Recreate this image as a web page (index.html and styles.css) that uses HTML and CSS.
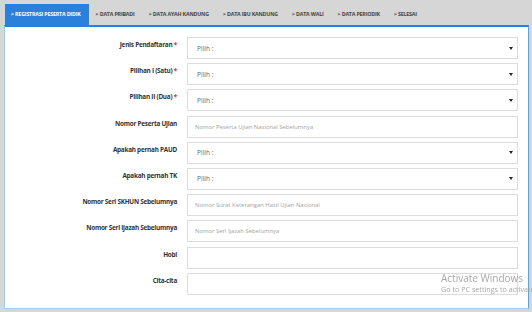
FILE: index.html
```html
<!DOCTYPE html>
<html lang="en">
<head>
    <meta charset="UTF-8">
    <meta name="viewport" content="width=device-width, initial-scale=1.0">
    <title>Registrasi Peserta Didik</title>
    <link rel="stylesheet" href="styles.css">
</head>
<body>
<div class="wrap">
    <!-- Step tabs -->
    <ul class="tabs">
        <li class="active">&gt; REGISTRASI PESERTA DIDIK</li>
        <li>&gt; DATA PRIBADI</li>
        <li>&gt; DATA AYAH KANDUNG</li>
        <li>&gt; DATA IBU KANDUNG</li>
        <li>&gt; DATA WALI</li>
        <li>&gt; DATA PERIODIK</li>
        <li>&gt; SELESAI</li>
    </ul>

    <!-- Registration form -->
    <form class="panel">
        <div class="row">
            <label>Jenis Pendaftaran <span class="req">*</span></label>
            <div class="select"><span>Pilih :</span><i class="caret"></i></div>
        </div>
        <div class="row">
            <label>Pilihan I (Satu) <span class="req">*</span></label>
            <div class="select"><span>Pilih :</span><i class="caret"></i></div>
        </div>
        <div class="row">
            <label>Pilihan II (Dua) <span class="req">*</span></label>
            <div class="select"><span>Pilih :</span><i class="caret"></i></div>
        </div>
        <div class="row">
            <label>Nomor Peserta Ujian</label>
            <input type="text" placeholder="Nomor Peserta Ujian Nasional Sebelumnya">
        </div>
        <div class="row">
            <label>Apakah pernah PAUD</label>
            <div class="select"><span>Pilih :</span><i class="caret"></i></div>
        </div>
        <div class="row">
            <label>Apakah pernah TK</label>
            <div class="select"><span>Pilih :</span><i class="caret"></i></div>
        </div>
        <div class="row">
            <label>Nomor Seri SKHUN Sebelumnya</label>
            <input type="text" placeholder="Nomor Surat Keterangan Hasil Ujian Nasional">
        </div>
        <div class="row">
            <label>Nomor Seri Ijazah Sebelumnya</label>
            <input type="text" placeholder="Nomor Seri Ijazah Sebelumnya">
        </div>
        <div class="row">
            <label>Hobi</label>
            <input type="text">
        </div>
        <div class="row">
            <label>Cita-cita</label>
            <input type="text">
        </div>
    </form>
</div>

<!-- OS watermark -->
<div class="watermark">
    <div class="wm-title">Activate Windows</div>
    <div class="wm-sub">Go to PC settings to activate Windows.</div>
</div>
</body>
</html>
```

FILE: styles.css
```css
* {
    box-sizing: border-box;
}

body {
    margin: 0;
    background: #d6d6d6;
    font-family: 'Open Sans', sans-serif;
    color: #333;
    height: 312px;
    overflow: hidden;
}

.wrap {
    padding: 4px 3px 0 4px;
}

.tabs {
    list-style: none;
    margin: 0 0 0 1px;
    padding: 0;
    display: flex;
    height: 21px;
}

.tabs li {
    padding: 0 7px 0 7px;
    font-size: 5.3px;
    font-weight: 700;
    letter-spacing: -0.18px;
    line-height: 21px;
    color: #444;
    white-space: nowrap;
}

.tabs li.active {
    background: #2b80dc;
    color: #fff;
    padding: 0 8px 0 6px;
}

.panel {
    background: #fff;
    border: 1px solid #a9c8ee;
    border-top: 2px solid #2b80dc;
    border-right: 1px solid #5f9fe6;
    height: 284px;
    padding: 10px 10px 0 0;
    display: flex;
    flex-direction: column;
    gap: 4.2px;
}

.row {
    display: grid;
    grid-template-columns: 182px 331px;
    height: 22px;
}

.row label {
    text-align: right;
    padding: 4px 10px 0 0;
    font-size: 6.4px;
    font-weight: 700;
    letter-spacing: -0.25px;
    line-height: 8px;
    color: #333;
}

.req {
    color: #e0262a;
}

.select, .row input {
    border: 1px solid #dcdcdc;
    background: #fff;
    height: 22px;
    font-family: 'Open Sans', sans-serif;
}

.select {
    display: flex;
    align-items: center;
    justify-content: space-between;
    padding: 0 4px 0 9px;
    font-size: 6.6px;
    color: #666;
}

.caret {
    width: 0;
    height: 0;
    border-left: 2px solid transparent;
    border-right: 2px solid transparent;
    border-top: 3px solid #222;
}

.row input {
    padding: 0 7px;
    font-size: 5.9px;
    outline: none;
}

.row input::placeholder {
    color: #a3a3a3;
}

.watermark {
    position: fixed;
    left: 441px;
    top: 272px;
    color: #a8a8a8;
    white-space: nowrap;
    font-family: 'Open Sans', sans-serif;
}

.wm-title {
    font-size: 10px;
    line-height: 12px;
}

.wm-sub {
    font-size: 7.2px;
    line-height: 10px;
}
```
